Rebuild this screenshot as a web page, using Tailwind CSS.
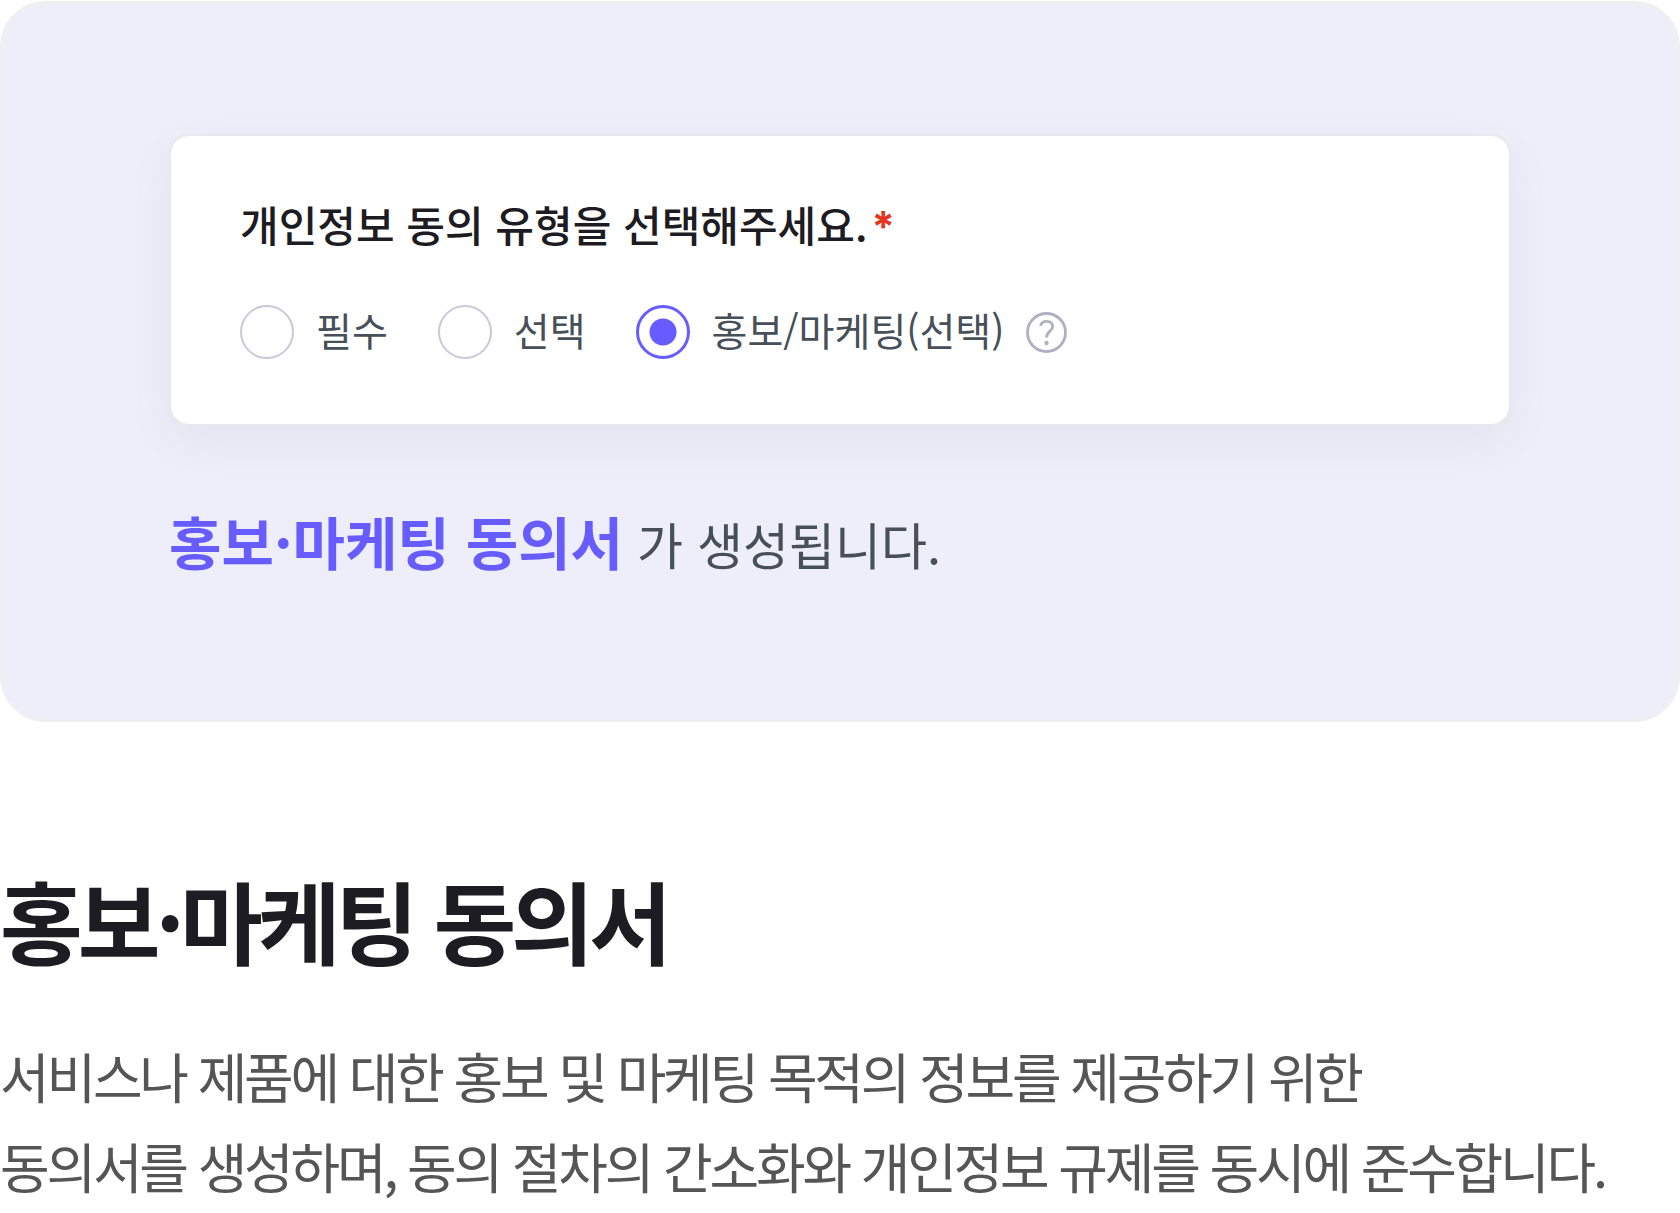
<!DOCTYPE html>
<html lang="ko">
<head>
<meta charset="utf-8">
<title>홍보·마케팅 동의서</title>
<script src="https://cdn.jsdelivr.net/npm/@tailwindcss/browser@4"></script>
</head>
<body class="bg-white font-['Noto_Sans_CJK_KR',sans-serif] break-keep">
<main class="pt-px">
<section class="rounded-[46px] border-3 border-[#efeff0] bg-[#eeeefa] px-[166px] pt-[130px] pb-[138px]">
<form class="rounded-[20px] border-2 border-[#e8e8ed] bg-white bg-clip-padding px-[69px] pt-[58px] pb-[62px] shadow-[0_16px_44px_rgba(60,60,100,0.06)]">
<fieldset>
<legend class="float-left h-[60px] w-full text-[42px] leading-[60px] font-medium text-[#1d1c22]">개인정보 동의 유형을 선택해주세요.<span class="ml-1 font-['Inter',sans-serif] font-bold text-[#e5351f]">*</span></legend>
<div class="clear-both flex items-center gap-[50px] pt-[48px] text-[39px] leading-[54px] text-[#474f58]">
<label class="flex items-center gap-[22px]"><input type="radio" name="consent" class="size-[54px] appearance-none rounded-full border-2 border-[#c9c8d8]"><span class="pb-1.5">필수</span></label>
<label class="flex items-center gap-[22px]"><input type="radio" name="consent" class="size-[54px] appearance-none rounded-full border-2 border-[#c9c8d8]"><span class="pb-1.5">선택</span></label>
<div class="flex items-center gap-[22px]">
<label class="flex items-center gap-[22px]"><input type="radio" name="consent" checked class="size-[54px] appearance-none rounded-full border-3 border-[#665cff] bg-[radial-gradient(circle,#665cff_13px,transparent_14px)]"><span class="pb-1.5">홍보/마케팅(선택)</span></label>
<button type="button" aria-label="도움말" class="size-[41px]">
<svg viewBox="0 0 41 41" class="size-full" fill="none" stroke="#b1b0c2" stroke-width="2.8"><circle cx="20.5" cy="20.5" r="19"/><path d="M14.5 13.8C15.300 10.900 17.800 9.400 20.700 9.400C24.300 9.400 26.700 11.500 26.700 14.500C26.700 19 20.500 19.500 20.500 25.500"/><circle cx="20.500" cy="31" r="2.200" fill="#b1b0c2" stroke="none"/></svg>
</button>
</div>
</div>
</fieldset>
</form>
<p class="pt-[76px] text-[50px] leading-[76px] text-[#474f58]"><strong class="text-[57px] font-bold text-[#665cff]">홍보·마케팅 동의서</strong> 가 생성됩니다.</p>
</section>
<h1 class="pt-[137px] text-[90px] leading-[120px] font-bold tracking-[-5px] text-[#1d1c22]">홍보·마케팅 동의서</h1>
<p class="pt-[52px] text-[54px] leading-[90px] tracking-[-0.06em] text-[#555]">서비스나 제품에 대한 홍보 및 마케팅 목적의 정보를 제공하기 위한<br>동의서를 생성하며, 동의 절차의 간소화와 개인정보 규제를 동시에 준수합니다.</p>
</main>
</body>
</html>
